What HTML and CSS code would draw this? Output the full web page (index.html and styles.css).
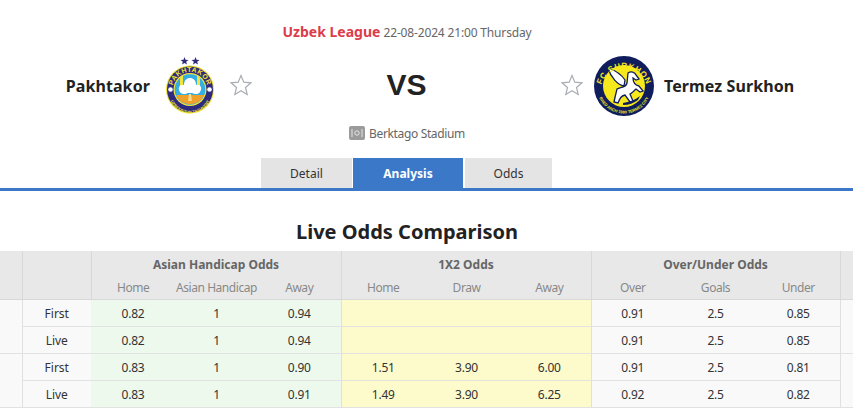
FILE: index.html
```html
<!DOCTYPE html>
<html lang="en">
<head>
<meta charset="utf-8">
<title>Pakhtakor vs Termez Surkhon</title>
<link rel="stylesheet" href="styles.css">
</head>
<body>
<header class="match">
  <div class="league"><span class="league-name">Uzbek League</span> <span class="date">22-08-2024 21:00 Thursday</span></div>
  <div class="teams">
    <div class="team team-home">
      <span class="team-name">Pakhtakor</span>
      <svg class="crest-home" viewBox="0 0 50 57" width="50" height="57">
        <polygon transform="translate(18.500 0) scale(.8) translate(-16 0)" fill="#2f2a7c" points="16,0 17.3,3.4 21,3.6 18.1,5.9 19.1,9.5 16,7.5 12.900,9.500 13.900,5.900 11,3.600 14.700,3.400"/>
        <polygon transform="translate(29.500 0) scale(.8) translate(-16 0)" fill="#2f2a7c" points="16,0 17.3,3.4 21,3.6 18.1,5.9 19.1,9.500 16,7.500 12.900,9.500 13.900,5.900 11,3.600 14.700,3.400"/>
        <circle cx="24" cy="32.500" r="24" fill="#f3e32a"/>
        <circle cx="24" cy="32.500" r="23" fill="#2d2a80"/>
        <circle cx="24" cy="32.500" r="16.500" fill="#f4e43a"/>
        <circle cx="24" cy="32.500" r="15.300" fill="#35aee2"/>
        <path d="M14 21v13h3V18zM34 21v13h-3V18z" fill="#f4e43a"/>
        <path d="M10 38h28a15.300 15.300 0 0 1-28 0z" fill="#f0a12c"/>
        <path d="M22 44l1-7h2l1 7z" fill="#f7d98a"/>
        <path d="M14 35c-3-4 0-8 4-7 0-5 3-7 6-7s6 2 6 7c4-1 7 3 4 7-2 3-6 2-8 1h-4c-2 1-6 2-8-1z" fill="#fff"/>
        <circle cx="4.500" cy="32.500" r="2.300" fill="#fff"/>
        <circle cx="43.500" cy="32.500" r="2.300" fill="#fff"/>
        <path id="arc-top" d="M6.500 32.500a17.500 17.500 0 0 1 35 0" fill="none"/>
        <path id="arc-bottom" d="M2.500 35a21.500 21.500 0 0 0 43 0" fill="none"/>
        <text class="crest-text-home"><textPath href="#arc-top" startOffset="50%" text-anchor="middle">PAKHTAKOR</textPath></text>
        <text class="crest-small-home"><textPath href="#arc-bottom" startOffset="50%" text-anchor="middle">UZBEKISTON TASHKENT</textPath></text>
      </svg>
      <svg class="star" viewBox="0 0 22 22" width="22" height="22"><polygon points="11,1.500 13.800,8.200 21,8.800 15.500,13.500 17.200,20.500 11,16.800 4.800,20.500 6.500,13.500 1,8.800 8.200,8.200" fill="#fff" stroke="#a9adb3" stroke-width="1.200"/></svg>
    </div>
    <div class="vs">VS</div>
    <div class="team team-away">
      <svg class="star" viewBox="0 0 22 22" width="22" height="22"><polygon points="11,1.500 13.800,8.200 21,8.800 15.500,13.500 17.200,20.500 11,16.800 4.800,20.500 6.500,13.500 1,8.800 8.200,8.200" fill="#fff" stroke="#a9adb3" stroke-width="1.200"/></svg>
      <svg class="crest-away" viewBox="0 0 60 60" width="60" height="60">
        <circle cx="30" cy="30" r="30" fill="#101d5c"/>
        <circle cx="30" cy="30" r="21" fill="#f6e81c"/>
        <path d="M30 30C24 29 17 22 14 12 20 14 27 18 31 24z" fill="#fff" stroke="#101d5c" stroke-width="1.300"/>
        <path d="M34 17C37 15 41 16 42 19L45 23 42 24 39 22C39 27 41 29 45 30L49 35 46 36 42 33C40 35 38 37 36 38L39 45 36 46 31 39C27 40 26 42 24 47L20 46C21 41 22 37 23 33 26 31 32 32 33 27Z" fill="#fff" stroke="#101d5c" stroke-width="1.300"/>
        <path d="M29 47c6-1 12-3 17-7l-2 4c-4 3-9 5-15 5z" fill="#101d5c"/>
        <path id="arc-top-away" d="M6.500 33a23.700 23.700 0 0 1 47 0" fill="none"/>
        <path id="arc-bottom-away" d="M2.500 30a27.500 27.500 0 0 0 55 0" fill="none"/>
        <text class="crest-text-away"><textPath href="#arc-top-away" startOffset="50%" text-anchor="middle">FC SURKHON</textPath></text>
        <text class="crest-small-away"><textPath href="#arc-bottom-away" startOffset="50%" text-anchor="middle">BRED ARCH 1980 TERMEZ CITY</textPath></text>
      </svg>
      <span class="team-name">Termez Surkhon</span>
    </div>
  </div>
  <div class="venue">
    <svg class="venue-icon" viewBox="0 0 16 14" width="16" height="14"><rect width="16" height="14" rx="2" fill="#9b9b9b"/><path d="M3 3v8M13 3v8" stroke="#e4e4e4"/><circle cx="8" cy="7" r="2.200" fill="none" stroke="#e4e4e4"/></svg>
    <span>Berktago Stadium</span>
  </div>
</header>
<nav class="tabs-bar">
  <div class="tabs">
    <a class="tab tab-detail">Detail</a>
    <a class="tab tab-analysis">Analysis</a>
    <a class="tab tab-odds">Odds</a>
  </div>
</nav>
<h2 class="section-title">Live Odds Comparison</h2>
<table class="odds">
  <colgroup>
    <col class="c-a"><col class="c-b">
    <col class="c-w"><col class="c-n"><col class="c-n">
    <col class="c-w"><col class="c-n"><col class="c-n">
    <col class="c-n"><col class="c-n"><col class="c-n">
    <col class="c-z">
  </colgroup>
  <thead>
    <tr class="head-1">
      <th rowspan="2"></th><th rowspan="2"></th>
      <th colspan="3" class="group">Asian Handicap Odds</th>
      <th colspan="3" class="group">1X2 Odds</th>
      <th colspan="3" class="group">Over/Under Odds</th>
      <th rowspan="2"></th>
    </tr>
    <tr class="head-2">
      <th>Home</th><th>Asian Handicap</th><th>Away</th>
      <th>Home</th><th>Draw</th><th>Away</th>
      <th>Over</th><th>Goals</th><th>Under</th>
    </tr>
  </thead>
  <tbody>
    <tr>
      <td rowspan="2" class="side"></td><td class="side">First</td>
      <td class="ah">0.82</td><td class="ah">1</td><td class="ah end">0.94</td>
      <td class="x"></td><td class="x"></td><td class="x end"></td>
      <td class="ou">0.91</td><td class="ou">2.5</td><td class="ou">0.85</td>
      <td rowspan="2" class="side"></td>
    </tr>
    <tr>
      <td class="side">Live</td>
      <td class="ah">0.82</td><td class="ah">1</td><td class="ah end">0.94</td>
      <td class="x"></td><td class="x"></td><td class="x end"></td>
      <td class="ou">0.91</td><td class="ou">2.5</td><td class="ou">0.85</td>
    </tr>
    <tr>
      <td rowspan="2" class="side"></td><td class="side">First</td>
      <td class="ah">0.83</td><td class="ah">1</td><td class="ah end">0.90</td>
      <td class="x">1.51</td><td class="x">3.90</td><td class="x end">6.00</td>
      <td class="ou">0.91</td><td class="ou">2.5</td><td class="ou">0.81</td>
      <td rowspan="2" class="side"></td>
    </tr>
    <tr>
      <td class="side">Live</td>
      <td class="ah">0.83</td><td class="ah">1</td><td class="ah end">0.91</td>
      <td class="x">1.49</td><td class="x">3.90</td><td class="x end">6.25</td>
      <td class="ou">0.92</td><td class="ou">2.5</td><td class="ou">0.82</td>
    </tr>
  </tbody>
</table>
</body>
</html>
```
FILE: styles.css
```css
* { box-sizing: border-box; }
html, body { margin: 0; padding: 0; }
body {
  width: 853px;
  height: 414px;
  overflow: hidden;
  background: #fff;
  font-family: "Noto Sans", "DejaVu Sans", sans-serif;
  font-size: 12px;
  color: #333;
}
.match { width: 814px; padding-top: 22px; }
.league { text-align: center; height: 20px; line-height: 20px; }
.league-name { font-size: 14px; font-weight: 700; color: #dc3c4a; }
.date { color: #666; letter-spacing: -.16px; }
.teams {
  display: grid;
  grid-template-columns: 252px 1fr 253px;
  align-items: center;
  height: 62px;
  margin-top: 13px;
}
.team { display: flex; align-items: center; }
.team-home { justify-content: flex-end; }
.team-name { font-size: 16px; font-weight: 700; color: #222; white-space: nowrap; letter-spacing: .1px; }
.crest-home { margin: -2px 14px 0 16px; flex: none; }
.star { flex: none; margin-top: -2px; }
.crest-away { margin: 0 10px 0 11px; flex: none; }
.vs {
  text-align: center;
  font-family: "Liberation Sans", Arial, sans-serif;
  font-size: 30px;
  font-weight: 700;
  color: #222;
  margin-top: -2px;
}
.crest-text-home { font-size: 7px; font-weight: 700; fill: #f3e32a; font-family: "Liberation Sans", sans-serif; letter-spacing: .3px; }
.crest-small-home { font-size: 4px; font-weight: 700; fill: #f3e32a; font-family: "Liberation Sans", sans-serif; }
.crest-text-away { font-size: 8px; font-weight: 700; fill: #f6e81c; font-family: "Liberation Sans", sans-serif; letter-spacing: .6px; }
.crest-small-away { font-size: 4px; font-weight: 700; fill: #f6e81c; font-family: "Liberation Sans", sans-serif; }
.venue {
  display: flex;
  justify-content: center;
  align-items: center;
  gap: 4px;
  height: 20px;
  margin-top: 6px;
  color: #666;
  letter-spacing: -.35px;
}
.tabs-bar { border-bottom: 3px solid #3c78c8; height: 33px; margin-top: 15px; }
.tabs { width: 813px; display: flex; justify-content: center; height: 30px; }
.tab {
  display: flex;
  align-items: center;
  justify-content: center;
  background: #e4e4e4;
  color: #333;
}
.tab-detail { width: 91px; margin-right: 1px; }
.tab-analysis { width: 110px; margin-right: 2px; background: #3c78c8; color: #fff; font-weight: 700; }
.tab-odds { width: 87px; }
.section-title {
  margin: 25px 0 4px;
  width: 814px;
  height: 31px;
  line-height: 31px;
  text-align: center;
  font-size: 20px;
  font-weight: 700;
  color: #222;
}
.odds {
  width: 853px;
  table-layout: fixed;
  border-collapse: collapse;
}
.c-a { width: 22px; }
.c-b { width: 69px; }
.c-w { width: 84px; }
.c-n { width: 83px; }
.c-z { width: 13px; }
.odds th, .odds td { padding: 0; text-align: center; font-weight: 400; white-space: nowrap; }
.odds th {
  background: #e8e8e8;
  border-left: 1px solid #d8d8d8;
}
.head-1 th { height: 25px; padding-top: 2px; }
.head-2 th {
  height: 23px;
  color: #888;
  border-left: none;
  vertical-align: top;
  line-height: 18px;
  padding-top: 3px;
  letter-spacing: -.45px;
}
.head-2 th:nth-child(3n+1) { border-left: 1px solid #d8d8d8; }
.odds th.group { font-weight: 700; color: #666; }
.odds thead tr:last-child th { border-bottom: 1px solid #d8d8d8; }
.odds thead tr:first-child th[rowspan] { border-bottom: 1px solid #d8d8d8; }
.odds thead tr:first-child th:first-child { border-left: none; }
.odds td {
  height: 27px;
  color: #333;
  border-bottom: 1px solid #e2e2e2;
  padding-top: 2px;
  letter-spacing: -.25px;
}
.odds td.side { background: #f9f9f9; border-left: 1px solid #e0e0e0; letter-spacing: 0; }
.odds tbody tr > td.side:first-child[rowspan] { border-left: none; }
.odds td.ah { background: #edf9ed; }
.odds td.x { background: #fdfacc; }
.odds td.ou { background: #f9f9f9; }
.odds td.ah.end, .odds td.x.end { border-right: 1px solid #e0e0e0; }
.odds td.ou + td.side { border-left: 1px solid #e0e0e0; }
```
